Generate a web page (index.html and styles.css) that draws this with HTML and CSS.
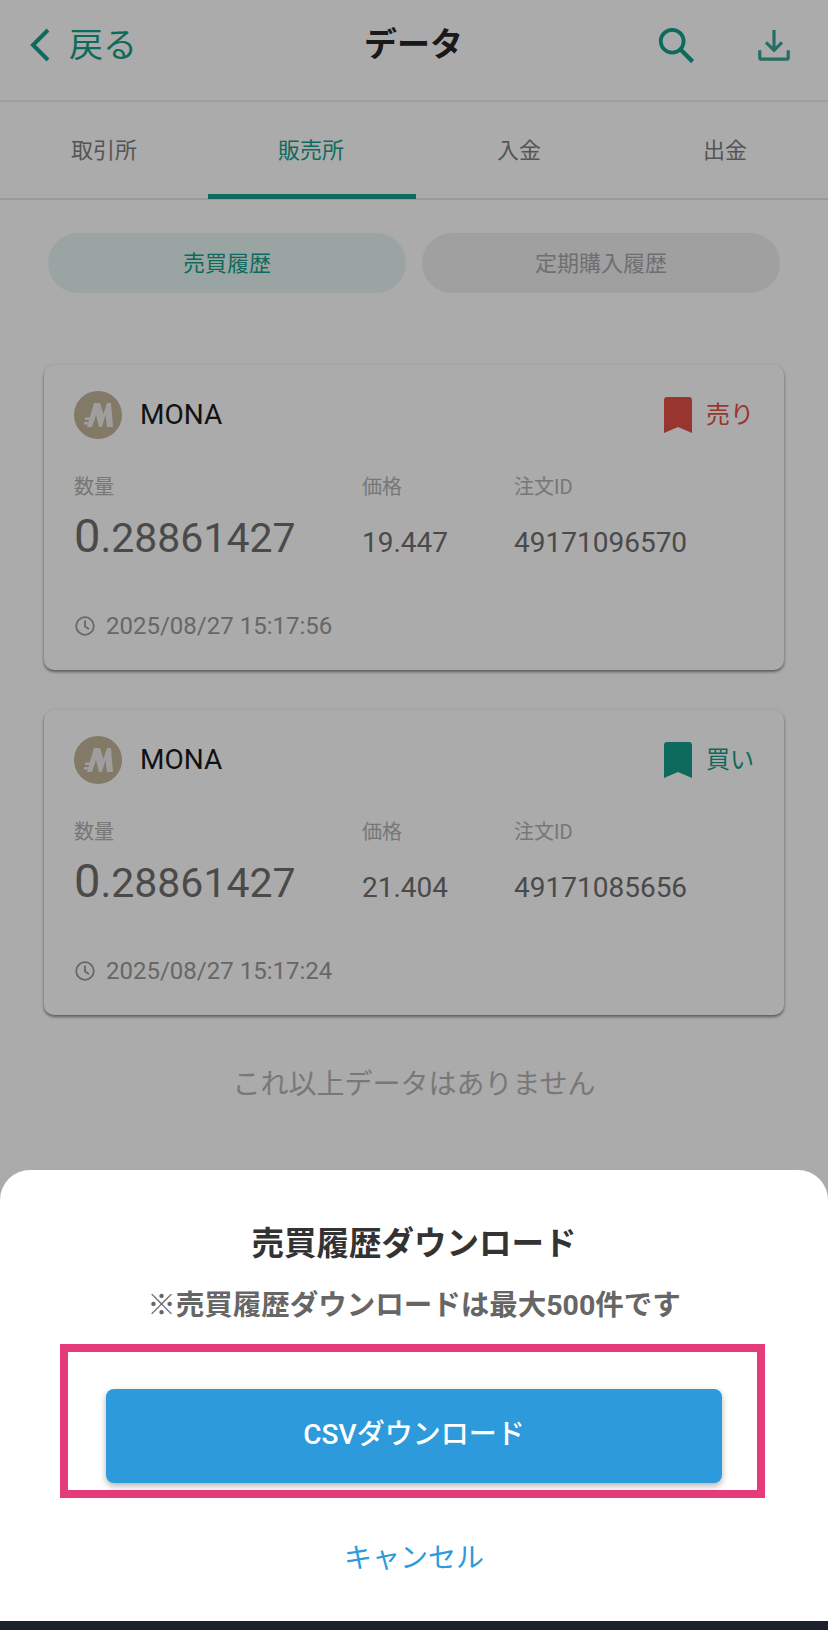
FILE: index.html
```html
<!DOCTYPE html>
<html lang="ja">
<head>
  <meta charset="UTF-8" />
  <meta name="viewport" content="width=device-width, initial-scale=1.0" />
  <title>データ</title>
  <link rel="stylesheet" href="styles.css">
</head>
<body>
  <header class="topbar">
    <a class="back">
      <svg width="24" height="36" viewBox="0 0 24 36"><path d="M20 3 5 18l15 15" fill="none" stroke="currentColor" stroke-width="4"/></svg>
      <span>戻る</span>
    </a>
    <h1>データ</h1>
    <div class="actions">
      <svg width="38" height="38" viewBox="0 0 40 40"><circle cx="16" cy="16" r="12" fill="none" stroke="currentColor" stroke-width="4"/><path d="m24.5 24.5 13 13" stroke="currentColor" stroke-width="4.5"/></svg>
      <svg class="dl" width="32" height="34" viewBox="0 0 36 36"><path d="M18 1v23M9 15l9 9 9-9" fill="none" stroke="currentColor" stroke-width="3.6"/><path d="M2 24v8a2 2 0 0 0 2 2h28a2 2 0 0 0 2-2v-8" fill="none" stroke="currentColor" stroke-width="3.6"/></svg>
    </div>
  </header>

  <nav class="tabs">
    <a>取引所</a>
    <a class="active">販売所</a>
    <a>入金</a>
    <a>出金</a>
  </nav>

  <div class="pills">
    <a class="pill on">売買履歴</a>
    <a class="pill">定期購入履歴</a>
  </div>

  <section class="list">
    <article class="card">
      <div class="card-head">
        <svg class="coin" width="48" height="48" viewBox="0 0 48 48"><circle cx="24" cy="24" r="24" fill="#c2b698"/><path d="M20 12h6l3.500 11L33 12h4l2 24h-6l-1.500-12L28 36h-3l-3-12-4 12h-5zM11 26.500h9.500V29H11zM10 31h9v2.500h-9z" fill="#ececec"/></svg>
        <span class="coin-name">MONA</span>
        <span class="side sell">
          <svg width="28" height="36" viewBox="0 0 28 36"><path d="M0 3a3 3 0 0 1 3-3h22a3 3 0 0 1 3 3v33l-14-6-14 6z" fill="currentColor"/></svg>
          売り
        </span>
      </div>
      <div class="fields">
        <span class="label">数量</span>
        <span class="label">価格</span>
        <span class="label">注文ID</span>
        <span class="amount"><b>0</b>.28861427</span>
        <span class="value">19.447</span>
        <span class="value">49171096570</span>
      </div>
      <div class="time">
        <svg width="20" height="20" viewBox="0 0 20 20"><circle cx="10" cy="10" r="8.8" fill="none" stroke="currentColor" stroke-width="1.8"/><path d="M10 4.500V10.500l4 2.500" fill="none" stroke="currentColor" stroke-width="1.8"/></svg>
        2025/08/27 15:17:56
      </div>
    </article>

    <article class="card">
      <div class="card-head">
        <svg class="coin" width="48" height="48" viewBox="0 0 48 48"><circle cx="24" cy="24" r="24" fill="#c2b698"/><path d="M20 12h6l3.500 11L33 12h4l2 24h-6l-1.500-12L28 36h-3l-3-12-4 12h-5zM11 26.500h9.500V29H11zM10 31h9v2.500h-9z" fill="#ececec"/></svg>
        <span class="coin-name">MONA</span>
        <span class="side buy">
          <svg width="28" height="36" viewBox="0 0 28 36"><path d="M0 3a3 3 0 0 1 3-3h22a3 3 0 0 1 3 3v33l-14-6-14 6z" fill="currentColor"/></svg>
          買い
        </span>
      </div>
      <div class="fields">
        <span class="label">数量</span>
        <span class="label">価格</span>
        <span class="label">注文ID</span>
        <span class="amount"><b>0</b>.28861427</span>
        <span class="value">21.404</span>
        <span class="value">49171085656</span>
      </div>
      <div class="time">
        <svg width="20" height="20" viewBox="0 0 20 20"><circle cx="10" cy="10" r="8.8" fill="none" stroke="currentColor" stroke-width="1.8"/><path d="M10 4.500V10.500l4 2.500" fill="none" stroke="currentColor" stroke-width="1.8"/></svg>
        2025/08/27 15:17:24
      </div>
    </article>

    <p class="no-more">これ以上データはありません</p>
  </section>

  <div class="backdrop">
    <div class="sheet">
      <h2>売買履歴ダウンロード</h2>
      <p class="note">※売買履歴ダウンロードは最大500件です</p>
      <div class="marker">
        <button class="csv">CSVダウンロード</button>
      </div>
      <a class="cancel">キャンセル</a>
    </div>
    <div class="navbar"></div>
  </div>
</body>
</html>
```

FILE: styles.css
```css
* {
  box-sizing: border-box;
}

body {
  margin: 0;
  height: 1630px;
  overflow: hidden;
  position: relative;
  font-family: Roboto, "Noto Sans CJK JP", sans-serif;
  background: #fff;
  color: #262626;
}

.topbar {
  height: 102px;
  display: grid;
  grid-template-columns: 1fr auto 1fr;
  align-items: center;
  padding: 0 38px 10px 28px;
  border-bottom: 2px solid #ececec;
  color: #169f89;
}

.back {
  display: flex;
  align-items: center;
  gap: 17px;
  font-size: 34px;
  line-height: 40px;
}

.topbar h1 {
  margin: 0 0 0 9px;
  font-size: 33px;
  line-height: 40px;
  font-weight: 700;
  color: #262626;
}

.actions {
  display: flex;
  justify-content: flex-end;
  align-items: center;
  gap: 63px;
}

.actions .dl {
  color: #3aa394;
}

.tabs {
  height: 98px;
  display: grid;
  grid-template-columns: 208px 208px 206px 206px;
  border-bottom: 2px solid #e6e6e6;
}

.tabs a {
  display: flex;
  align-items: center;
  justify-content: center;
  font-size: 22px;
  color: #7f7f7f;
  padding-bottom: 4px;
}

.tabs a.active {
  color: #169f89;
  border-bottom: 5px solid #169f89;
  margin-bottom: -1px;
  padding: 0 2px 0 0;
}

.pills {
  display: flex;
  gap: 16px;
  margin: 33px 48px 0;
}

.pill {
  flex: 1;
  height: 60px;
  padding-bottom: 4px;
  border-radius: 30px;
  background: #efefef;
  color: #a6a6a6;
  font-size: 22px;
  display: flex;
  align-items: center;
  justify-content: center;
}

.pill.on {
  background: #e6f6f3;
  color: #169f89;
}

.list {
  margin: 72px 44px 0;
}

.card {
  height: 305px;
  margin-bottom: 40px;
  padding: 26px 30px 0;
  border-radius: 10px;
  background: #fff;
  box-shadow: 0 2px 3px rgba(0, 0, 0, 0.45), 0 0 4px rgba(0, 0, 0, 0.06);
}

.card-head {
  display: flex;
  align-items: center;
  height: 48px;
}

.coin-name {
  margin-left: 18px;
  padding-bottom: 2px;
  font-size: 28px;
  color: #1a1a1a;
}

.side {
  margin-left: auto;
  display: flex;
  align-items: center;
  gap: 14px;
  padding-bottom: 5px;
  font-size: 24px;
}

.side svg {
  margin-top: 4px;
}

.side.sell {
  color: #e44f47;
}

.side.buy {
  color: #169f89;
}

.fields {
  margin-top: 34px;
  display: grid;
  grid-template-columns: 288px 152px 1fr;
  grid-template-rows: 28px 54px;
  align-items: baseline;
}

.label {
  font-size: 20px;
  line-height: 28px;
  color: #b2b2b2;
}

.amount,
.value {
  font-size: 28px;
  line-height: 54px;
  color: #6f6f6f;
  margin-top: 8px;
}

.amount {
  font-size: 41px;
}

.amount b {
  font-size: 47px;
  font-weight: 400;
}

.time {
  margin-top: 56px;
  display: flex;
  align-items: center;
  gap: 11px;
  padding-left: 1px;
  font-size: 24px;
  line-height: 30px;
  color: #9a9a9a;
}

.no-more {
  margin: 0;
  padding-top: 10px;
  text-align: center;
  font-size: 28px;
  line-height: 40px;
  color: #b4b4b4;
}

/* dimmed layer over the page, holds the bottom sheet */
.backdrop {
  position: absolute;
  inset: 0;
  display: flex;
  flex-direction: column;
  justify-content: flex-end;
  background: rgba(0, 0, 0, 0.33);
}

.sheet {
  height: 451px;
  padding-top: 52px;
  background: #fff;
  border-radius: 30px 30px 0 0;
  text-align: center;
}

.sheet h2 {
  margin: 0;
  font-size: 32.5px;
  line-height: 44px;
  font-weight: 700;
  color: #333;
}

.note {
  margin: 20px 0 0;
  font-size: 28.5px;
  line-height: 40px;
  font-weight: 700;
  color: #666;
}

.marker {
  width: 705px;
  height: 154px;
  margin: 18px 0 0 60px;
  padding: 37px 35px 0 38px;
  border: 8px solid #e63b7a;
}

.csv {
  display: block;
  width: 100%;
  height: 94px;
  padding-bottom: 9px;
  border: none;
  border-radius: 8px;
  background: #2d9adb;
  color: #fff;
  font-family: inherit;
  font-size: 28px;
  font-weight: 500;
  box-shadow: 0 3px 6px rgba(0, 0, 0, 0.3);
}

.cancel {
  display: block;
  margin-top: 41px;
  font-size: 28px;
  line-height: 40px;
  color: #2d9adb;
}

.navbar {
  height: 9px;
  background: #1a202c;
}
```
